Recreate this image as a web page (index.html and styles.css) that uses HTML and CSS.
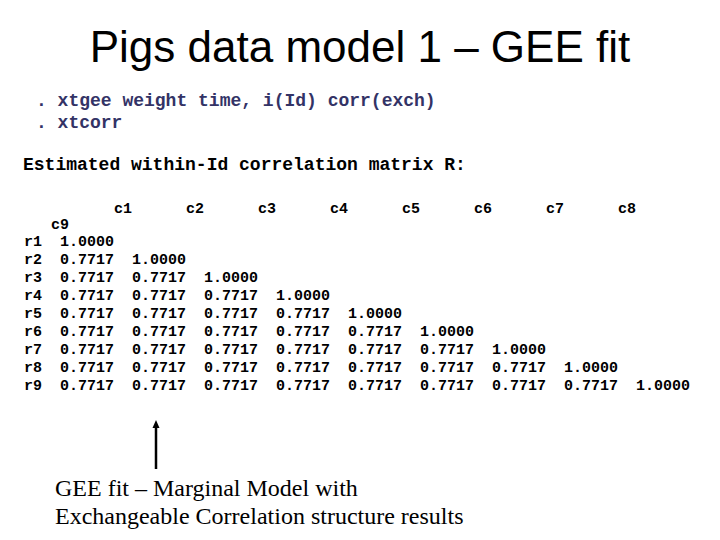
FILE: index.html
```html
<!DOCTYPE html>
<html lang="en">
<head>
    <meta charset="UTF-8">
    <meta name="viewport" content="width=device-width, initial-scale=1.0">
    <title>Pigs data model 1 – GEE fit</title>
    <link rel="stylesheet" href="styles.css">
</head>
<body>
    <h1 class="title">Pigs data model 1 – GEE fit</h1>

    <pre class="cmds">. xtgee weight time, i(Id) corr(exch)
. xtcorr</pre>

    <pre class="heading">Estimated within-Id correlation matrix R:</pre>

    <div class="matrix">
<pre class="matrix-head">          c1      c2      c3      c4      c5      c6      c7      c8
   c9</pre>
<pre class="matrix-body">r1  1.0000
r2  0.7717  1.0000
r3  0.7717  0.7717  1.0000
r4  0.7717  0.7717  0.7717  1.0000
r5  0.7717  0.7717  0.7717  0.7717  1.0000
r6  0.7717  0.7717  0.7717  0.7717  0.7717  1.0000
r7  0.7717  0.7717  0.7717  0.7717  0.7717  0.7717  1.0000
r8  0.7717  0.7717  0.7717  0.7717  0.7717  0.7717  0.7717  1.0000
r9  0.7717  0.7717  0.7717  0.7717  0.7717  0.7717  0.7717  0.7717  1.0000</pre>
    </div>

    <div class="note">
        <svg class="arrow" width="12" height="50" viewBox="0 0 12 50">
            <line x1="6" y1="6" x2="6" y2="49" stroke="#000" stroke-width="2.5"/>
            <polygon points="6,0 2.5,8 9.5,8" fill="#000"/>
        </svg>
        <p class="note-text">GEE fit – Marginal Model with<br>Exchangeable Correlation structure results</p>
    </div>
</body>
</html>
```

FILE: styles.css
```css
body {
    margin: 0;
    background: #fff;
    color: #000;
}

.title {
    margin: 22px 0 0;
    font-family: "Liberation Sans", Arial, sans-serif;
    font-size: 44px;
    font-weight: normal;
    line-height: 50px;
    text-align: center;
}

pre {
    margin: 0;
    font-family: "Liberation Mono", "Courier New", monospace;
    font-weight: bold;
}

.cmds {
    margin-top: 18px;
    padding-left: 36px;
    font-size: 18px;
    line-height: 22px;
    color: #333366;
}

.heading {
    margin-top: 20px;
    padding-left: 23px;
    font-size: 18px;
    line-height: 22px;
}

.matrix {
    margin-top: 26px;
    padding-left: 24px;
}

.matrix-head {
    font-size: 15px;
    line-height: 16px;
}

.matrix-body {
    font-size: 15px;
    line-height: 18px;
}

.note {
    margin-top: 24px;
}

.arrow {
    display: block;
    margin-left: 150px;
}

.note-text {
    margin: 4px 0 0;
    padding-left: 55px;
    font-family: "Liberation Serif", "Times New Roman", serif;
    font-size: 24px;
    line-height: 28px;
}
```
